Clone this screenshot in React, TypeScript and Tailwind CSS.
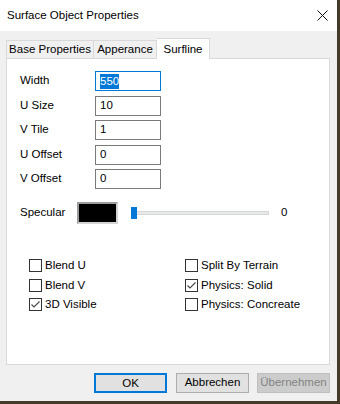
import React from "react";

const font = { fontFamily: '"Liberation Sans", Arial, sans-serif' };

const fields = [
  { label: "Width", value: "550", focus: true, mt: "mt-0" },
  { label: "U Size", value: "10", mt: "mt-[5px]" },
  { label: "V Tile", value: "1", mt: "mt-[4px]" },
  { label: "U Offset", value: "0", mt: "mt-[5px]" },
  { label: "V Offset", value: "0", mt: "mt-[4px]" },
];

function Check({ label, checked, className }: { label: string; checked?: boolean; className?: string }) {
  return (
    <div className={`flex h-[13px] items-center ${className ?? ""}`}>
      <div className="flex h-[13px] w-[13px] shrink-0 items-center justify-center border border-[#333333] bg-white">
        {checked && (
          <svg width="11" height="11" viewBox="0 0 11 11">
            <path d="M1.5 5.5 L4 8 L9.5 2.5" fill="none" stroke="#4a4a4a" strokeWidth="1.2" />
          </svg>
        )}
      </div>
      <span className="ml-[3px] whitespace-nowrap text-[11.5px] leading-none text-black">{label}</span>
    </div>
  );
}

export default function App() {
  return (
    <div className="h-[404px] w-[340px] bg-[#45392a] text-[11.5px]" style={font}>
      <div className="flex h-[401px] w-[337px] flex-col bg-[#f0f0f0]">
        <div className="flex h-[31px] items-center justify-between bg-white pl-[7px] pr-[9px]">
          <span className="text-black">Surface Object Properties</span>
          <svg width="11" height="11" viewBox="0 0 11 11">
            <path d="M0.5 0.5 L10.5 10.5 M10.5 0.5 L0.5 10.5" stroke="#111" strokeWidth="1" />
          </svg>
        </div>
        <div className="px-[6px] pt-[7px]">
          <div className="flex items-end">
            <div className="flex h-[18px] w-[88px] items-center justify-center whitespace-nowrap border border-b-0 border-[#d9d9d9] bg-[#f0f0f0] text-black">
              Base Properties
            </div>
            <div className="flex h-[18px] w-[63px] items-center justify-center whitespace-nowrap border border-b-0 border-l-0 border-[#d9d9d9] bg-[#f0f0f0] text-black">
              Apperance
            </div>
            <div className="relative -mb-px flex h-[21px] w-[53px] items-start justify-center border border-b-0 border-l-0 border-[#d9d9d9] bg-white pt-[2px] text-black">
              Surfline
            </div>
          </div>
          <div className="h-[307px] w-[324px] border border-[#d9d9d9] bg-white pl-[13px] pt-[12px]">
            {fields.map((f) => (
              <div key={f.label} className={`flex h-[20px] items-center ${f.mt}`}>
                <span className="w-[75px] text-black">{f.label}</span>
                <div
                  className={`flex h-[20px] w-[66px] items-center border px-[4px] ${
                    f.focus ? "border-[#0078d7]" : "border-[#7a7a7a]"
                  }`}
                >
                  <span className={f.focus ? "bg-[#0078d7] leading-[15px] text-white" : "text-black"}>{f.value}</span>
                </div>
              </div>
            ))}
            <div className="mt-[13px] flex h-[22px] items-center">
              <span className="w-[57px] text-black">Specular</span>
              <div className="h-[22px] w-[41px] border-2 border-[#9c9c9c] border-b-[#d4d4d4] border-r-[#d4d4d4] bg-black" />
              <div className="relative ml-[13px] flex h-[22px] w-[138px] items-center">
                <div className="h-[4px] w-full border border-[#d6d6d6] bg-[#e7eaea]" />
                <div className="absolute left-0 top-[5px] h-[12px] w-[6px] bg-[#0078d7]" />
              </div>
              <span className="ml-[12px] text-black">0</span>
            </div>
            <div className="mt-[35px] flex pl-[9px]">
              <div className="flex w-[156px] flex-col">
                <Check label="Blend U" />
                <Check label="Blend V" className="mt-[7px]" />
                <Check label="3D Visible" checked className="mt-[6px]" />
              </div>
              <div className="flex flex-col">
                <Check label="Split By Terrain" />
                <Check label="Physics: Solid" checked className="mt-[7px]" />
                <Check label="Physics: Concreate" className="mt-[6px]" />
              </div>
            </div>
          </div>
          <div className="mt-[8px] flex w-[324px] justify-end gap-[8px]">
            <button className="h-[20px] w-[73px] border-2 border-[#0078d7] bg-[#e1e1e1] text-black">OK</button>
            <button className="ml-[1px] h-[20px] w-[73px] border border-[#adadad] bg-[#e1e1e1] text-black">
              Abbrechen
            </button>
            <button className="h-[20px] w-[73px] border border-[#bfbfbf] bg-[#cccccc] text-[#838383]">
              Übernehmen
            </button>
          </div>
        </div>
      </div>
    </div>
  );
}
